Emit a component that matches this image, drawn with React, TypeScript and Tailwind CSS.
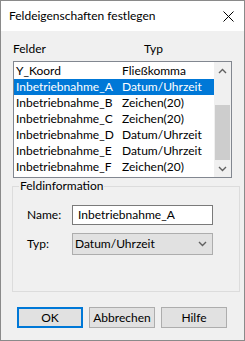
const rows = [
  { name: "Y_Koord", type: "Fließkomma" },
  { name: "Inbetriebnahme_A", type: "Datum/Uhrzeit" },
  { name: "Inbetriebnahme_B", type: "Zeichen(20)" },
  { name: "Inbetriebnahme_C", type: "Zeichen(20)" },
  { name: "Inbetriebnahme_D", type: "Datum/Uhrzeit" },
  { name: "Inbetriebnahme_E", type: "Datum/Uhrzeit" },
  { name: "Inbetriebnahme_F", type: "Zeichen(20)" },
];

function Chevron({ up = false }: { up?: boolean }) {
  return (
    <svg width="9" height="6" viewBox="0 0 9 6" className="block">
      <path
        d={up ? "M1 5 L4.5 1.5 L8 5" : "M1 1 L4.5 4.5 L8 1"}
        fill="none"
        stroke="#606060"
        strokeWidth="1.4"
      />
    </svg>
  );
}

export default function App() {
  return (
    <div
      className="flex h-[341px] w-[245px] flex-col border border-[#8a8a8a] bg-[#f0f0f0] text-[12px] leading-[16px] text-black"
      style={{ fontFamily: 'Lato, sans-serif' }}
    >
      <div className="flex h-[30px] shrink-0 items-center justify-between bg-white pl-[8px] pr-[10px]">
        <span>Feldeigenschaften festlegen</span>
        <svg width="11" height="11" viewBox="0 0 11 11">
          <path d="M0.5 0.5 L10.5 10.5 M10.5 0.5 L0.5 10.5" stroke="#000" strokeWidth="1" />
        </svg>
      </div>

      <div className="flex pl-[12px] pt-[10px]">
        <span className="w-[131px]">Felder</span>
        <span>Typ</span>
      </div>

      <div className="ml-[12px] mt-[4px] flex h-[117px] w-[219px] border border-[#828790] bg-white">
        <ul className="flex-1 pt-[1px]">
          {rows.map((r, i) => (
            <li
              key={r.name}
              className={`flex h-[16px] items-center pl-[2px] ${i === 1 ? "bg-[#0078d7] text-white" : ""}`}
            >
              <span className="w-[106px]">{r.name}</span>
              <span>{r.type}</span>
            </li>
          ))}
        </ul>
        <div className="flex w-[17px] flex-col bg-[#f0f0f0]">
          <div className="flex h-[17px] items-center justify-center">
            <Chevron up />
          </div>
          <div className="flex flex-1 flex-col justify-end px-[1px]">
            <div className="h-[55px] bg-[#cdcdcd]" />
          </div>
          <div className="flex h-[17px] items-center justify-center">
            <Chevron />
          </div>
        </div>
      </div>

      <fieldset className="ml-[11px] h-[114px] w-[228px] border border-[#dcdcdc]">
        <legend className="ml-[6px] px-[1px]">Feldinformation</legend>
        <div className="flex flex-col gap-[8px] pl-[14px] pt-[11px]">
          <div className="flex items-center">
            <span className="w-[45px]">Name:</span>
            <div className="flex h-[20px] w-[141px] items-center border border-[#7a7a7a] bg-white pl-[5px]">
              Inbetriebnahme_A
            </div>
          </div>
          <div className="flex items-center">
            <span className="w-[45px]">Typ:</span>
            <div className="flex h-[22px] w-[141px] items-center justify-between border border-[#adadad] bg-[#e1e1e1] pl-[2px] pr-[5px]">
              <span>Datum/Uhrzeit</span>
              <Chevron />
            </div>
          </div>
        </div>
      </fieldset>

      <div className="ml-[16px] mt-[15px] flex gap-[6px]">
        <button className="flex h-[21px] w-[66px] items-center justify-center border-2 border-[#0078d7] bg-[#e1e1e1]">
          OK
        </button>
        <button className="flex h-[21px] w-[66px] items-center justify-center border border-[#adadad] bg-[#e1e1e1]">
          Abbrechen
        </button>
        <button className="flex h-[21px] w-[66px] items-center justify-center border border-[#adadad] bg-[#e1e1e1]">
          Hilfe
        </button>
      </div>
    </div>
  );
}
